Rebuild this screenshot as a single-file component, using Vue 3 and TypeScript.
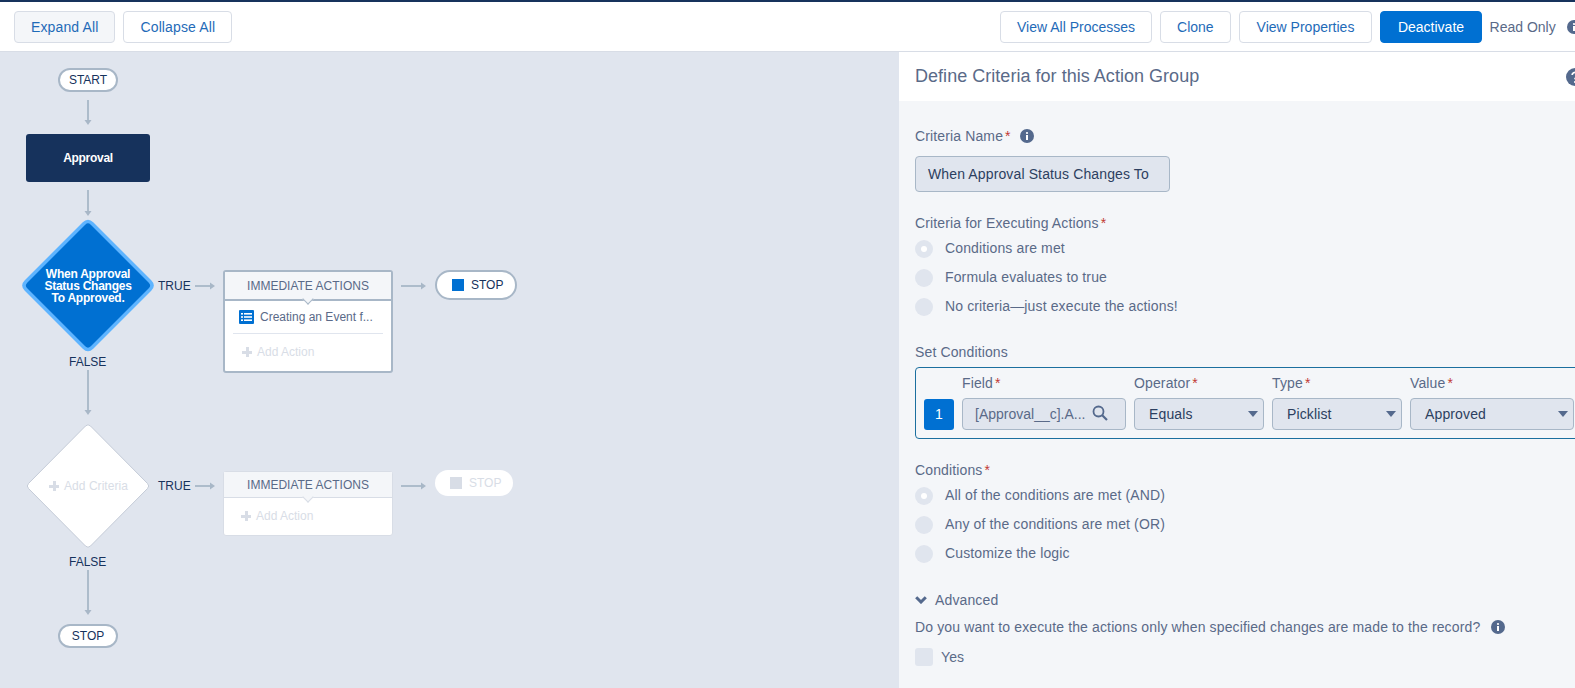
<script setup lang="ts">
const criteria: string[] = ['Conditions are met', 'Formula evaluates to true', 'No criteria—just execute the actions!']
const logic: string[] = ['All of the conditions are met (AND)', 'Any of the conditions are met (OR)', 'Customize the logic']
const selects = [
  { label: 'Operator', value: 'Equals' },
  { label: 'Type', value: 'Picklist' },
  { label: 'Value', value: 'Approved' }
]
const vArrows = [
  { x: 88, y1: 100, y2: 125 },
  { x: 88, y1: 190, y2: 216 },
  { x: 88, y1: 370, y2: 415 },
  { x: 88, y1: 570, y2: 615 }
]
const hArrows = [
  { y: 286, x1: 195, x2: 215 },
  { y: 286, x1: 401, x2: 426 },
  { y: 486, x1: 195, x2: 215 },
  { y: 486, x1: 401, x2: 426 }
]
</script>

<template>
  <div class="page">
    <header class="toolbar">
      <div class="tool-left">
        <button class="btn btn-active">Expand All</button>
        <button class="btn">Collapse All</button>
      </div>
      <div class="tool-right">
        <button class="btn">View All Processes</button>
        <button class="btn">Clone</button>
        <button class="btn btn-props">View Properties</button>
        <button class="btn btn-primary">Deactivate</button>
        <span class="read-only">Read Only</span>
        <svg class="info" viewBox="0 0 14 14"><circle cx="7" cy="7" r="7" fill="#54698d" /><rect x="6" y="6" width="2" height="5" fill="#fff" /><circle cx="7" cy="4" r="1.1" fill="#fff" /></svg>
      </div>
    </header>

    <div class="main">
      <section class="canvas">
        <svg class="wires" width="895" height="636" viewBox="0 52 895 636">
          <g v-for="a in vArrows" :key="a.y1">
            <line :x1="a.x" :x2="a.x" :y1="a.y1" :y2="a.y2 - 4" stroke="#a8b7c7" stroke-width="1.8" />
            <path :d="`M${a.x - 3.5} ${a.y2 - 5}h7l-3.5 5z`" fill="#a8b7c7" />
          </g>
          <g v-for="a in hArrows" :key="`${a.x1}-${a.y}`">
            <line :x1="a.x1" :x2="a.x2 - 4" :y1="a.y" :y2="a.y" stroke="#a8b7c7" stroke-width="1.8" />
            <path :d="`M${a.x2 - 5} ${a.y - 3.5}v7l5 -3.5z`" fill="#a8b7c7" />
          </g>
          <path d="M84 223.5Q88 219.5 92 223.5L150 281.5Q154 285.5 150 289.5L92 347.5Q88 351.5 84 347.5L26 289.5Q22 285.5 26 281.5Z" fill="#0070d2" stroke="#5eb4ff" stroke-width="3.5" stroke-linejoin="round" />
          <path d="M85.5 426Q88 423.5 90.5 426L147.5 483.5Q150 486 147.5 488.5L90.5 546Q88 548.5 85.5 546L28.5 488.5Q26 486 28.5 483.5Z" fill="#fff" stroke="#c5ccd8" stroke-width="1" stroke-linejoin="round" />
        </svg>

        <div class="pill pill-start">START</div>
        <div class="approval">Approval</div>
        <div class="diamond-text">When Approval<br />Status Changes<br />To Approved.</div>
        <div class="edge true-1">TRUE</div>
        <div class="edge false-1">FALSE</div>

        <div class="actions actions-1">
          <div class="actions-head">IMMEDIATE ACTIONS</div>
          <div class="action-row">
            <svg class="action-icon" viewBox="0 0 15 14"><rect width="15" height="14" rx="1" fill="#0070d2" /><rect x="2" y="3" width="2" height="1.6" fill="#fff" /><rect x="5" y="3" width="8" height="1.6" fill="#fff" /><rect x="2" y="6.2" width="2" height="1.6" fill="#fff" /><rect x="5" y="6.2" width="8" height="1.6" fill="#fff" /><rect x="2" y="9.4" width="2" height="1.6" fill="#fff" /><rect x="5" y="9.4" width="8" height="1.6" fill="#fff" /></svg>
            <span>Creating an Event f...</span>
          </div>
          <div class="add-row add-row-1"><span class="plus"></span>Add Action</div>
        </div>
        <div class="stop-big"><span class="stop-square"></span>STOP</div>

        <div class="add-criteria"><span class="plus"></span>Add Criteria</div>
        <div class="edge true-2">TRUE</div>
        <div class="edge false-2">FALSE</div>

        <div class="actions actions-2">
          <div class="actions-head">IMMEDIATE ACTIONS</div>
          <div class="add-row add-row-2"><span class="plus"></span>Add Action</div>
        </div>
        <div class="stop-ghost"><span class="stop-square"></span>STOP</div>
        <div class="pill pill-stop">STOP</div>
      </section>

      <aside class="panel">
        <div class="panel-title">
          <h1>Define Criteria for this Action Group</h1>
          <svg class="help" viewBox="0 0 18 18"><circle cx="9" cy="9" r="9" fill="#54698d" /><path d="M6.2 7a2.8 2.6 0 1 1 4.3 2.2c-1 .7-1.5 1-1.5 2.1" fill="none" stroke="#fff" stroke-width="1.8" /><circle cx="9" cy="14" r="1.1" fill="#fff" /></svg>
        </div>

        <div class="form">
          <div class="label">Criteria Name<i>*</i>
            <svg class="info label-info" viewBox="0 0 14 14"><circle cx="7" cy="7" r="7" fill="#54698d" /><rect x="6" y="6" width="2" height="5" fill="#fff" /><circle cx="7" cy="4" r="1.1" fill="#fff" /></svg>
          </div>
          <div class="name-input">When Approval Status Changes To</div>

          <div class="label sec-1">Criteria for Executing Actions<i>*</i></div>
          <div class="radios">
            <div v-for="(c, i) in criteria" :key="c" class="radio-row">
              <span class="radio" :class="{ on: i === 0 }"></span><span class="radio-text">{{ c }}</span>
            </div>
          </div>

          <div class="label sec-2">Set Conditions</div>
          <div class="cond-box">
            <div class="cond-grid">
              <span></span>
              <div class="label">Field<i>*</i></div>
              <div v-for="s in selects" :key="s.label" class="label">{{ s.label }}<i>*</i></div>
              <div class="num">1</div>
              <div class="control field">
                <span>[Approval__c].A...</span>
                <svg class="search" viewBox="0 0 16 16"><circle cx="6.5" cy="6.5" r="5" fill="none" stroke="#54698d" stroke-width="1.8" /><line x1="10.2" y1="10.2" x2="15" y2="15" stroke="#54698d" stroke-width="2.2" /></svg>
              </div>
              <div v-for="s in selects" :key="s.value" class="control select">
                <span>{{ s.value }}</span><span class="caret"></span>
              </div>
            </div>
          </div>

          <div class="label sec-3">Conditions<i>*</i></div>
          <div class="radios">
            <div v-for="(c, i) in logic" :key="c" class="radio-row">
              <span class="radio" :class="{ on: i === 0 }"></span><span class="radio-text">{{ c }}</span>
            </div>
          </div>

          <div class="label advanced">
            <svg class="chev" viewBox="0 0 12 8"><path d="M1.2 1.2L6 6l4.8-4.8" fill="none" stroke="#54698d" stroke-width="3" /></svg>
            Advanced
          </div>
          <div class="label question">Do you want to execute the actions only when specified changes are made to the record?
            <svg class="info q-info" viewBox="0 0 14 14"><circle cx="7" cy="7" r="7" fill="#54698d" /><rect x="6" y="6" width="2" height="5" fill="#fff" /><circle cx="7" cy="4" r="1.1" fill="#fff" /></svg>
          </div>
          <div class="check-row"><span class="check"></span>Yes</div>
        </div>
      </aside>
    </div>
  </div>
</template>

<style>
html, body { margin: 0; overflow: hidden; }
</style>

<style scoped>
.page {
  width: 1575px;
  height: 688px;
  overflow: hidden;
  display: flex;
  flex-direction: column;
  font-family: "Liberation Sans", Arial, sans-serif;
  font-size: 14px;
  color: #5a6a88;
  background: #e0e5ee;
}
.toolbar {
  flex: 0 0 auto;
  display: flex;
  height: 40px;
  padding: 9px 0 0 14px;
  background: #fff;
  border-top: 2px solid #16325c;
  border-bottom: 1px solid #d8dde6;
  overflow: hidden;
}
.tool-left { flex: 0 0 986px; display: flex; gap: 8px; }
.tool-left .btn { letter-spacing: 0.13px; }
.tool-right { flex: 0 0 auto; display: flex; gap: 8px; align-items: flex-start; }
.btn {
  height: 32px;
  padding: 0 16px;
  font: 14px "Liberation Sans", Arial, sans-serif;
  color: #1f6bb8;
  background: #fff;
  border: 1px solid #d8dde6;
  border-radius: 4px;
}
.btn-active { background: #f4f6f9; }
.btn-props { padding: 0 17px; }
.btn-primary { background: #0070d2; border-color: #0070d2; color: #fff; padding: 0 16.5px; }
.read-only { line-height: 32px; white-space: nowrap; }
.info { width: 14px; height: 14px; flex: 0 0 auto; }
.tool-right .info { margin: 9px 0 0 3px; }

.main { flex: 1; display: flex; min-height: 0; }
.canvas { position: relative; flex: 0 0 895px; background: #e0e5ee; font-size: 12px; }
.wires { position: absolute; left: 0; top: 0; }

.pill {
  position: absolute;
  left: 58px;
  width: 60px;
  height: 24px;
  box-sizing: border-box;
  border: 2px solid #a8b7c7;
  border-radius: 12px;
  background: #fff;
  color: #16325c;
  text-align: center;
  line-height: 20px;
}
.pill-start { top: 16px; }
.pill-stop { top: 572px; }
.approval {
  position: absolute;
  left: 26px;
  top: 82px;
  width: 124px;
  height: 48px;
  background: #16325c;
  border-radius: 3px;
  color: #fff;
  font-weight: 700;
  letter-spacing: -0.3px;
  text-align: center;
  line-height: 49px;
}
.diamond-text {
  position: absolute;
  left: 28px;
  top: 216px;
  width: 120px;
  color: #fff;
  font-weight: 700;
  letter-spacing: -0.25px;
  text-align: center;
  line-height: 12px;
}
.edge { position: absolute; color: #16325c; line-height: 14px; }
.true-1 { left: 158px; top: 227px; }
.false-1 { left: 69px; top: 303px; }
.true-2 { left: 158px; top: 427px; }
.false-2 { left: 69px; top: 503px; }

.actions {
  position: absolute;
  left: 223px;
  width: 170px;
  box-sizing: border-box;
  background: #fff;
  border-radius: 3px;
}
.actions-1 { top: 218px; height: 103px; border: 2px solid #a8b7c7; }
.actions-2 { top: 419px; height: 65px; border: 1px solid #d8dde6; }
.actions-head {
  position: relative;
  background: #f4f6f9;
  text-align: center;
  color: #5a6a88;
}
.actions-1 .actions-head { height: 27px; line-height: 29px; border-bottom: 2px solid #a8b7c7; }
.actions-2 .actions-head { height: 25px; line-height: 26px; border-bottom: 1px solid #d8dde6; }
.actions-head::after {
  content: "";
  position: absolute;
  left: 50%;
  bottom: -4px;
  width: 7px;
  height: 7px;
  margin-left: -4px;
  background: #f4f6f9;
  transform: rotate(45deg);
  border-right: 1px solid #a8b7c7;
  border-bottom: 1px solid #a8b7c7;
}
.actions-2 .actions-head::after { border-color: #d8dde6; }
.action-row {
  display: flex;
  align-items: center;
  gap: 6px;
  height: 32px;
  margin: 0 8px;
  padding: 0 0 0 6px;
  border-bottom: 1px solid #e0e5ee;
}
.action-icon { width: 15px; height: 14px; }
.add-row { display: flex; align-items: center; color: #d8dde6; }
.add-row-1 { padding: 8px 0 0 17px; height: 20px; line-height: 20px; }
.add-row-2 { padding: 8px 0 0 17px; height: 20px; }
.plus {
  width: 10px;
  height: 10px;
  margin-right: 5px;
  background:
    linear-gradient(#d8dde6, #d8dde6) center / 100% 3px no-repeat,
    linear-gradient(#d8dde6, #d8dde6) center / 3px 100% no-repeat;
}
.add-criteria {
  position: absolute;
  left: 49px;
  top: 426px;
  display: flex;
  align-items: center;
  color: #d8dde6;
  line-height: 16px;
  letter-spacing: 0.05px;
}
.stop-big, .stop-ghost {
  position: absolute;
  display: flex;
  align-items: center;
  box-sizing: border-box;
  border-radius: 15px;
  background: #fff;
}
.stop-big {
  left: 435px;
  top: 218px;
  width: 82px;
  height: 30px;
  padding: 0 0 0 15px;
  border: 2px solid #a8b7c7;
  color: #16325c;
}
.stop-ghost {
  left: 435px;
  top: 418px;
  width: 78px;
  height: 26px;
  padding-left: 15px;
  color: #d8dde6;
}
.stop-square { width: 12px; height: 12px; margin-right: 7px; background: #0070d2; }
.stop-ghost .stop-square { background: #d8dde6; }

.panel {
  flex: 1;
  min-width: 0;
  border-left: 4px solid #e0e5ee;
  background: #f4f6f9;
  overflow: hidden;
  letter-spacing: 0.13px;
}
.panel-title {
  display: flex;
  align-items: center;
  height: 49px;
  padding-left: 16px;
  background: #fff;
}
.panel-title h1 {
  flex: 0 0 651px;
  margin: 0;
  font-size: 18px;
  font-weight: 400;
  letter-spacing: 0.03px;
  color: #5a6a88;
}
.help { width: 18px; height: 18px; flex: 0 0 auto; }
.form { padding: 25px 0 0 16px; }
.label { line-height: 20px; white-space: nowrap; }
.label i { font-style: normal; color: #c23934; margin-left: 2px; }
.label-info { margin-left: 9px; vertical-align: -2px; }
.name-input {
  box-sizing: border-box;
  width: 255px;
  height: 36px;
  margin-top: 10px;
  padding-left: 12px;
  line-height: 34px;
  color: #2c3f60;
  background: #e0e5ee;
  border: 1px solid #a8b7c7;
  border-radius: 4px;
}
.sec-1 { margin-top: 21px; }
.sec-2 { margin-top: 21px; }
.sec-3 { margin-top: 21px; }
.radios { margin-top: 1px; }
.radio-row { display: flex; align-items: center; height: 29px; }
.radio-text { margin-bottom: 2px; }
.radio {
  position: relative;
  flex: 0 0 18px;
  height: 18px;
  margin-right: 12px;
  border-radius: 50%;
  background: #e0e5ee;
}
.radio.on::after {
  content: "";
  position: absolute;
  left: 6px;
  top: 6px;
  width: 6px;
  height: 6px;
  border-radius: 50%;
  background: #fff;
}
.cond-box {
  box-sizing: border-box;
  width: 680px;
  height: 72px;
  margin-top: 5px;
  padding: 5px 8px 0;
  border: 1px solid #1b6f9f;
  border-radius: 4px;
}
.cond-grid {
  display: grid;
  grid-template-columns: 30px 164px 130px 130px 164px;
  grid-template-rows: 20px 32px;
  column-gap: 8px;
  row-gap: 5px;
  align-items: end;
}
.num {
  height: 31px;
  line-height: 31px;
  text-align: center;
  color: #fff;
  background: #0070d2;
  border-radius: 3px;
}
.control {
  box-sizing: border-box;
  display: flex;
  align-items: center;
  justify-content: space-between;
  height: 32px;
  background: #e0e5ee;
  border: 1px solid #a8b7c7;
  border-radius: 4px;
}
.field { padding: 0 17px 0 12px; letter-spacing: 0; }
.select { padding: 0 5px 0 14px; color: #2c3f60; }
.search { width: 16px; height: 16px; margin-top: -3px; }
.caret {
  width: 0;
  height: 0;
  border-left: 5px solid transparent;
  border-right: 5px solid transparent;
  border-top: 6px solid #54698d;
}
.advanced { display: flex; align-items: center; margin-top: 22px; }
.chev { width: 12px; height: 8px; margin-right: 8px; }
.question { margin-top: 7px; }
.q-info { margin-left: 7px; vertical-align: -2px; }
.check-row { display: flex; align-items: center; height: 18px; margin-top: 11px; }
.check {
  width: 18px;
  height: 18px;
  margin-right: 8px;
  background: #e0e5ee;
  border-radius: 3px;
}
</style>
